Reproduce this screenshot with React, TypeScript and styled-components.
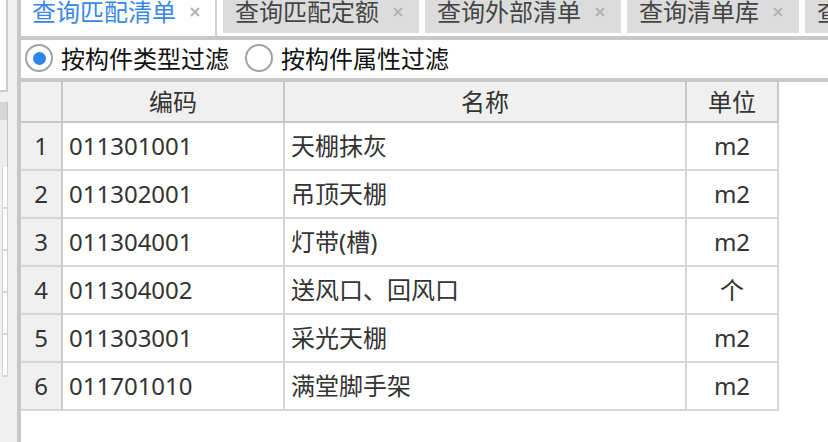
import React from "react";
import styled, { createGlobalStyle } from "styled-components";

const GlobalStyle = createGlobalStyle`
  html, body {
    margin: 0;
    padding: 0;
    background: #ffffff;
    overflow: hidden;
  }
  body {
    font-family: "Noto Sans", "Noto Sans CJK SC", sans-serif;
  }
`;

const Page = styled.div`
  display: flex;
  width: 828px;
  height: 442px;
  overflow: hidden;
  background: #f0f0f0;
`;

/* remains of the neighbouring panel on the left */
const SideStrip = styled.div`
  flex: none;
  width: 17px;
  display: flex;
  flex-direction: column;
  background: #f0f0f0;
`;

const StubPanel = styled.div`
  width: 8px;
  height: 92px;
  box-sizing: border-box;
  background: #ffffff;
  border-right: 2px solid #cccccc;
  border-bottom: 2px solid #cccccc;
`;

const StubGap = styled.div`
  height: 10px;
`;

const StubTab = styled.div<{ $h: number; $bg: string }>`
  width: 8px;
  height: ${({ $h }) => $h}px;
  box-sizing: border-box;
  background: ${({ $bg }) => $bg};
  border-right: 1px solid #c4c4c4;
`;

const StubRow = styled.div`
  width: 6px;
  height: 42px;
  margin-left: 2px;
  box-sizing: border-box;
  background: #ffffff;
  border-left: 1px solid #d2d2d2;
  border-right: 1px solid #d2d2d2;
  border-bottom: 2px solid #d6d6d6;
`;

const Main = styled.div`
  flex: 1;
  display: flex;
  flex-direction: column;
  min-width: 0;
  background: #ffffff;
  border-left: 4px solid #c8c8c8;
`;

const TabBar = styled.div`
  flex: none;
  display: flex;
  align-items: flex-start;
  height: 36px;
  overflow: hidden;
  background: #ffffff;
  border-bottom: 4px solid #c8c8c8;
`;

const Tab = styled.div<{ $active?: boolean }>`
  flex: none;
  display: flex;
  align-items: flex-start;
  box-sizing: border-box;
  height: ${({ $active }) => ($active ? 36 : 33)}px;
  padding: ${({ $active }) => ($active ? "0 14px 0 11px" : "0 15px 0 12px")};
  margin-left: ${({ $active }) => ($active ? 0 : 6)}px;
  background: ${({ $active }) => ($active ? "#ffffff" : "#dcdcdc")};
  border-right: ${({ $active }) => ($active ? "2px solid #d2d2d2" : "none")};
`;

const TabLabel = styled.span<{ $active?: boolean }>`
  font-size: 24px;
  line-height: 24px;
  white-space: nowrap;
  color: ${({ $active }) => ($active ? "#3987e6" : "#444444")};
`;

const CloseIcon = styled.svg`
  flex: none;
  width: 12px;
  height: 12px;
  margin: 6px 0 0 13px;
`;

const FilterBar = styled.div`
  flex: none;
  display: flex;
  align-items: center;
  gap: 16px;
  height: 38px;
  padding-left: 4px;
  border-bottom: 4px solid #c8c8c8;
`;

const RadioOption = styled.label`
  display: flex;
  align-items: center;
  gap: 8px;
  font-size: 24px;
  line-height: 24px;
  color: #111111;
  white-space: nowrap;
`;

const RadioCircle = styled.span`
  display: flex;
  align-items: center;
  justify-content: center;
  width: 28px;
  height: 28px;
  margin-bottom: 2px;
  box-sizing: border-box;
  border: 2px solid #a2a2a2;
  border-radius: 50%;
  background: #ffffff;
`;

const RadioDot = styled.span`
  width: 13px;
  height: 13px;
  border-radius: 50%;
  background: #2d86e8;
`;

const Grid = styled.div`
  display: grid;
  grid-template-columns: 42px 222px 402px 92px;
  width: max-content;
`;

const HeaderCell = styled.div`
  display: flex;
  align-items: center;
  justify-content: center;
  height: 41px;
  box-sizing: border-box;
  background: #f0f0f0;
  border-right: 2px solid #c8c8c8;
  border-bottom: 2px solid #c8c8c8;
  font-size: 24px;
  line-height: 24px;
  color: #333333;
`;

const Cell = styled.div<{ $align?: "left" | "center"; $index?: boolean }>`
  display: flex;
  align-items: center;
  justify-content: ${({ $align }) => ($align === "left" ? "flex-start" : "center")};
  height: 48px;
  box-sizing: border-box;
  padding: 0 6px;
  background: ${({ $index }) => ($index ? "#f0f0f0" : "#ffffff")};
  border-right: 2px solid ${({ $index }) => ($index ? "#cccccc" : "#d6d6d6")};
  border-bottom: 2px solid #d6d6d6;
  font-size: 24px;
  line-height: 24px;
  color: #333333;
  white-space: nowrap;
`;

const tabs = ["查询匹配清单", "查询匹配定额", "查询外部清单", "查询清单库", "查询定额库"];

const rows = [
  { code: "011301001", name: "天棚抹灰", unit: "m2" },
  { code: "011302001", name: "吊顶天棚", unit: "m2" },
  { code: "011304001", name: "灯带(槽)", unit: "m2" },
  { code: "011304002", name: "送风口、回风口", unit: "个" },
  { code: "011303001", name: "采光天棚", unit: "m2" },
  { code: "011701010", name: "满堂脚手架", unit: "m2" },
];

function Close() {
  return (
    <CloseIcon viewBox="0 0 12 12">
      <path d="M2 2 L10 10 M10 2 L2 10" stroke="#b4b4b4" strokeWidth="2" fill="none" />
    </CloseIcon>
  );
}

export default function App() {
  return (
    <>
      <GlobalStyle />
      <Page>
        <SideStrip>
          <StubPanel />
          <StubGap />
          <StubTab $h={18} $bg="#d6d6d6" />
          <StubTab $h={47} $bg="#ececec" />
          {[0, 1, 2, 3, 4].map((i) => (
            <StubRow key={i} />
          ))}
        </SideStrip>
        <Main>
          <TabBar>
            {tabs.map((t, i) => (
              <Tab key={t} $active={i === 0}>
                <TabLabel $active={i === 0}>{t}</TabLabel>
                <Close />
              </Tab>
            ))}
          </TabBar>
          <FilterBar>
            <RadioOption>
              <RadioCircle>
                <RadioDot />
              </RadioCircle>
              按构件类型过滤
            </RadioOption>
            <RadioOption>
              <RadioCircle />
              按构件属性过滤
            </RadioOption>
          </FilterBar>
          <Grid>
            <HeaderCell />
            <HeaderCell>编码</HeaderCell>
            <HeaderCell>名称</HeaderCell>
            <HeaderCell>单位</HeaderCell>
            {rows.map((r, i) => (
              <React.Fragment key={r.code}>
                <Cell $index>{i + 1}</Cell>
                <Cell $align="left">{r.code}</Cell>
                <Cell $align="left">{r.name}</Cell>
                <Cell>{r.unit}</Cell>
              </React.Fragment>
            ))}
          </Grid>
        </Main>
      </Page>
    </>
  );
}
